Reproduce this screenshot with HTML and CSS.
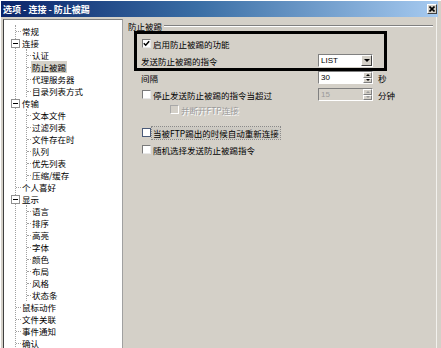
FILE: index.html
```html
<!DOCTYPE html>
<html lang="zh-CN">
<head>
    <meta charset="UTF-8">
    <title>选项 - 连接 - 防止被踢</title>
    <link rel="stylesheet" href="styles.css">
</head>
<body>
<div class="window">
    <div class="titlebar">
        <span>选项 - 连接 - 防止被踢</span>
        <span class="close">
            <svg width="6" height="6" viewBox="0 0 6 6"><path d="M0.5 0.5 L5.5 5.5 M5.5 0.5 L0.5 5.5" stroke="#000" stroke-width="1.6"/></svg>
        </span>
    </div>

    <div class="main">
        <div class="tree">
            <ul class="top">
                <li><div class="row">常规</div></li>
                <li>
                    <div class="row parent"><span class="toggle"></span>连接</div>
                    <ul class="sub">
                        <li><div class="row">认证</div></li>
                        <li><div class="row"><span class="sel">防止被踢</span></div></li>
                        <li><div class="row">代理服务器</div></li>
                        <li><div class="row">目录列表方式</div></li>
                    </ul>
                </li>
                <li>
                    <div class="row parent"><span class="toggle"></span>传输</div>
                    <ul class="sub">
                        <li><div class="row">文本文件</div></li>
                        <li><div class="row">过滤列表</div></li>
                        <li><div class="row">文件存在时</div></li>
                        <li><div class="row">队列</div></li>
                        <li><div class="row">优先列表</div></li>
                        <li><div class="row">压缩/缓存</div></li>
                    </ul>
                </li>
                <li><div class="row">个人喜好</div></li>
                <li>
                    <div class="row parent"><span class="toggle"></span>显示</div>
                    <ul class="sub">
                        <li><div class="row">语言</div></li>
                        <li><div class="row">排序</div></li>
                        <li><div class="row">高亮</div></li>
                        <li><div class="row">字体</div></li>
                        <li><div class="row">颜色</div></li>
                        <li><div class="row">布局</div></li>
                        <li><div class="row">风格</div></li>
                        <li><div class="row">状态条</div></li>
                    </ul>
                </li>
                <li><div class="row">鼠标动作</div></li>
                <li><div class="row">文件关联</div></li>
                <li><div class="row">事件通知</div></li>
                <li><div class="row">确认</div></li>
            </ul>
        </div>

        <div class="panel">
            <div class="group-head">防止被踢</div>

            <div class="group">
                <!-- black frame drawn around the first two options -->
                <div class="highlight">
                    <div class="field-row">
                        <span class="check">
                            <svg width="7" height="7" viewBox="0 0 7 7"><path d="M0.8 3.3 L2.7 5.2 L6.2 1.2" fill="none" stroke="#000" stroke-width="1.5"/></svg>
                        </span>
                        <span>启用防止被踢的功能</span>
                    </div>
                    <div class="field-row gap4">
                        <span class="label">发送防止被踢的指令</span>
                        <span class="combo"><span class="value">LIST</span><span class="btn"><span class="tri-down"></span></span></span>
                    </div>
                </div>

                <div class="rows">
                    <div class="field-row">
                        <span class="label">间隔</span>
                        <span class="spin"><span class="value">30</span><span class="arrows"><span class="up"><span class="tri-up"></span></span><span class="down"><span class="tri-down"></span></span></span></span>
                        <span class="unit">秒</span>
                    </div>
                    <div class="field-row gap4">
                        <span class="label"><span class="check"></span>停止发送防止被踢的指令当超过</span>
                        <span class="spin off"><span class="value">15</span><span class="arrows"><span class="up"><span class="tri-up"></span></span><span class="down"><span class="tri-down"></span></span></span></span>
                        <span class="unit">分钟</span>
                    </div>
                    <div class="field-row gap2 indent">
                        <span class="check off"></span>
                        <span class="dim">并断开FTP连接</span>
                    </div>
                    <div class="field-row gap10">
                        <span class="check focus"></span>
                        <span class="focused">当被FTP踢出的时候自动重新连接</span>
                    </div>
                    <div class="field-row gap4">
                        <span class="check"></span>
                        <span>随机选择发送防止被踢指令</span>
                    </div>
                </div>
            </div>
        </div>
    </div>
</div>
</body>
</html>
```

FILE: styles.css
```css
body {
    margin: 0;
    font-family: "Noto Sans CJK SC", "Liberation Sans", sans-serif;
    font-size: 8.5px;
    color: #000;
}
.window {
    width: 440px;
    height: 347px;
    border-top: 1px solid #fff;
    border-left: 1px solid #fff;
    background: #d4d0c8;
    overflow: hidden;
}

/* title bar */
.titlebar {
    height: 16px;
    margin-right: 3px;
    padding: 0 1px 0 2px;
    background: linear-gradient(to right, #0a246a, #3a6ea5 45%, #a6caf0);
    color: #fff;
    font-weight: bold;
    font-size: 9px;
    display: flex;
    align-items: center;
    justify-content: space-between;
}
.close {
    width: 10px;
    height: 10px;
    box-sizing: border-box;
    background: #d4d0c8;
    border: 1px solid;
    border-color: #fff #404040 #404040 #fff;
    display: flex;
    align-items: center;
    justify-content: center;
}

.main {
    display: flex;
    margin-right: 4px;
}

/* tree */
.tree {
    margin: 2px 0 0 2px;
    width: 118px;
    height: 340px;
    padding-top: 5px;
    background: #fff;
    border-top: 1px solid #808080;
    border-left: 1px solid #404040;
    border-right: 1px solid #a0a0a0;
}
.tree ul {
    list-style: none;
    margin: 0;
    padding: 0;
}
.tree .top {
    margin-left: 11px;
    border-left: 1px dotted #a0a0a0;
}
.tree .sub {
    margin-left: 10px;
    border-left: 1px dotted #a0a0a0;
}
.row {
    display: flex;
    align-items: center;
    height: 12px;
    line-height: 12px;
    white-space: nowrap;
}
.row::before {
    content: "";
    width: 5px;
    margin-right: 1px;
    border-top: 1px dotted #a0a0a0;
}
.sub .row::before {
    width: 4px;
}
.row.parent::before {
    display: none;
}
.toggle {
    width: 9px;
    height: 9px;
    box-sizing: border-box;
    margin-left: -5px;
    margin-right: 2px;
    border: 1px solid #909090;
    background: linear-gradient(#000, #000) center / 5px 1px no-repeat, #fff;
}
.sel {
    background: #d4d0c8;
    padding: 0 1px;
    margin-left: -1px;
}

/* right panel */
.panel {
    flex: 1;
    height: 331px;
    padding: 4px 3px 0 5px;
    border-right: 1px solid #f2f1ed;
}
.group-head {
    display: flex;
    align-items: center;
    height: 10px;
    line-height: 10px;
}
.group-head::after {
    content: "";
    flex: 1;
    margin-left: 2px;
    border-top: 1px solid #808080;
    border-bottom: 1px solid #fff;
}
.group {
    margin-left: 6px;
}
.highlight {
    width: 243px;
    border: 3px solid #000;
    padding: 3px 0 1px 4px;
}
.rows {
    padding-left: 7px;
}
.field-row {
    display: flex;
    align-items: center;
    height: 13px;
    white-space: nowrap;
}
.gap2 { margin-top: 2px; }
.gap4 { margin-top: 4px; }
.gap10 { margin-top: 10px; }
.indent { padding-left: 28px; }
.label {
    width: 177px;
    display: flex;
    align-items: center;
}
.unit {
    margin-left: 5px;
}

/* checkboxes */
.check {
    width: 9px;
    height: 9px;
    box-sizing: border-box;
    margin: 0 2px 0 1px;
    background: #fff;
    border: 1px solid;
    border-color: #7a7a7a #e8e8e8 #e8e8e8 #7a7a7a;
    display: flex;
    align-items: center;
    justify-content: center;
    flex: none;
}
.check.off {
    background: #d4d0c8;
    border-color: #a8a8a8 #fff #fff #a8a8a8;
}
.check.focus {
    border-color: #4a5a78;
}
.dim {
    color: #9a9a9a;
    text-shadow: 1px 1px 0 #fff;
}
.focused {
    background: #cdcac3;
    outline: 1px dotted #8a8a8a;
    padding: 0 1px;
    margin-left: -1px;
}

/* combo and spin boxes */
.combo, .spin {
    width: 55px;
    height: 13px;
    box-sizing: border-box;
    background: #fff;
    border: 1px solid;
    border-color: #808080 #fff #fff #808080;
    display: flex;
    font-family: "Liberation Sans", sans-serif;
    font-size: 8px;
}
.value {
    flex: 1;
    padding-left: 2px;
    line-height: 11px;
}
.combo .btn {
    width: 11px;
    background: #d4d0c8;
    box-sizing: border-box;
    border: 1px solid;
    border-color: #fff #404040 #404040 #fff;
    display: flex;
    align-items: center;
    justify-content: center;
}
.spin .arrows {
    width: 9px;
    display: flex;
    flex-direction: column;
    background: #d4d0c8;
}
.spin .up, .spin .down {
    flex: 1;
    display: flex;
    align-items: center;
    justify-content: center;
    border: 1px solid;
    border-color: #fff #808080 #808080 #fff;
}
.spin.off {
    background: #d4d0c8;
    color: #9a9a9a;
}
.spin.off .tri-up { border-bottom-color: #9a9a9a; }
.spin.off .tri-down { border-top-color: #9a9a9a; }
.tri-down {
    width: 0;
    height: 0;
    border-left: 3px solid transparent;
    border-right: 3px solid transparent;
    border-top: 3px solid #000;
}
.spin .tri-down, .spin .tri-up {
    border-left-width: 2px;
    border-right-width: 2px;
}
.spin .tri-down { border-top-width: 2px; }
.tri-up {
    width: 0;
    height: 0;
    border-left: 2px solid transparent;
    border-right: 2px solid transparent;
    border-bottom: 2px solid #000;
}
```
